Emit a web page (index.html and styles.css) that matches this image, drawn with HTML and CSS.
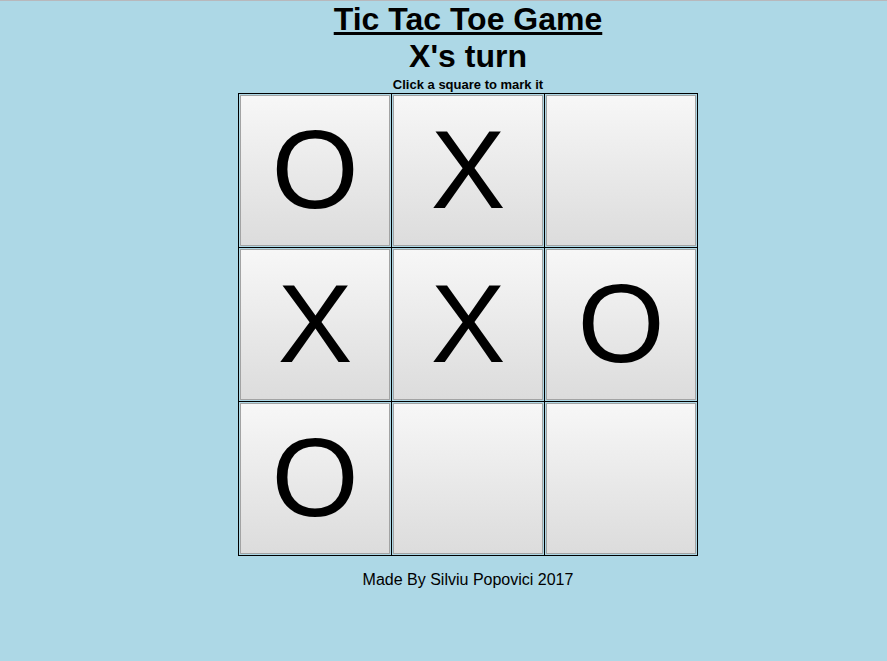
FILE: index.html
```html
<!DOCTYPE html>
<html>
<head>
<meta charset="utf-8">
<title>Tic Tac Toe Game</title>
<link rel="stylesheet" href="styles.css">
</head>
<body>
<div class="page">
  <h1 class="title">Tic Tac Toe Game</h1>
  <h1 class="turn">X's turn</h1>
  <h5 class="hint">Click a square to mark it</h5>
  <table class="board">
    <tr>
      <td><button class="sq">O</button></td>
      <td><button class="sq">X</button></td>
      <td><button class="sq"></button></td>
    </tr>
    <tr>
      <td><button class="sq">X</button></td>
      <td><button class="sq">X</button></td>
      <td><button class="sq">O</button></td>
    </tr>
    <tr>
      <td><button class="sq">O</button></td>
      <td><button class="sq"></button></td>
      <td><button class="sq"></button></td>
    </tr>
  </table>
  <p class="footer">Made By Silviu Popovici 2017</p>
</div>
</body>
</html>
```

FILE: styles.css
```css
html, body {
  margin: 0;
  padding: 0;
  overflow: hidden;
}
body {
  background: #add8e6;
  border-top: 1px solid #b8b8bc;
  font-family: "Liberation Sans", Arial, sans-serif;
  color: #000;
  min-height: 660px;
}
.page {
  margin-left: 49px;
  width: 838px;
  display: flex;
  flex-direction: column;
  align-items: center;
  text-align: center;
}
.title {
  margin: 0;
  font-size: 32px;
  font-weight: bold;
  text-decoration: underline;
  line-height: 36.8px;
}
.turn {
  margin: 0;
  font-size: 32px;
  font-weight: bold;
  line-height: 36.8px;
}
.hint {
  margin: 2px 0 0;
  font-size: 13px;
  font-weight: bold;
  line-height: 16px;
}
.board {
  margin-top: 0;
  border-collapse: collapse;
  border: 1px solid #000;
}
.board td {
  border: 1px solid #000;
  padding: 1px;
}
.sq {
  display: block;
  box-sizing: border-box;
  width: 150px;
  height: 151px;
  margin: 0;
  padding: 0;
  border: 1px solid #a3a3a3;
  background: linear-gradient(#f7f7f7, #dcdcdc);
  font-family: "Liberation Sans", Arial, sans-serif;
  font-size: 112px;
  line-height: 1;
  color: #000;
}
.footer {
  margin: 15px 0 0;
  font-size: 16px;
  line-height: 18px;
}
```
